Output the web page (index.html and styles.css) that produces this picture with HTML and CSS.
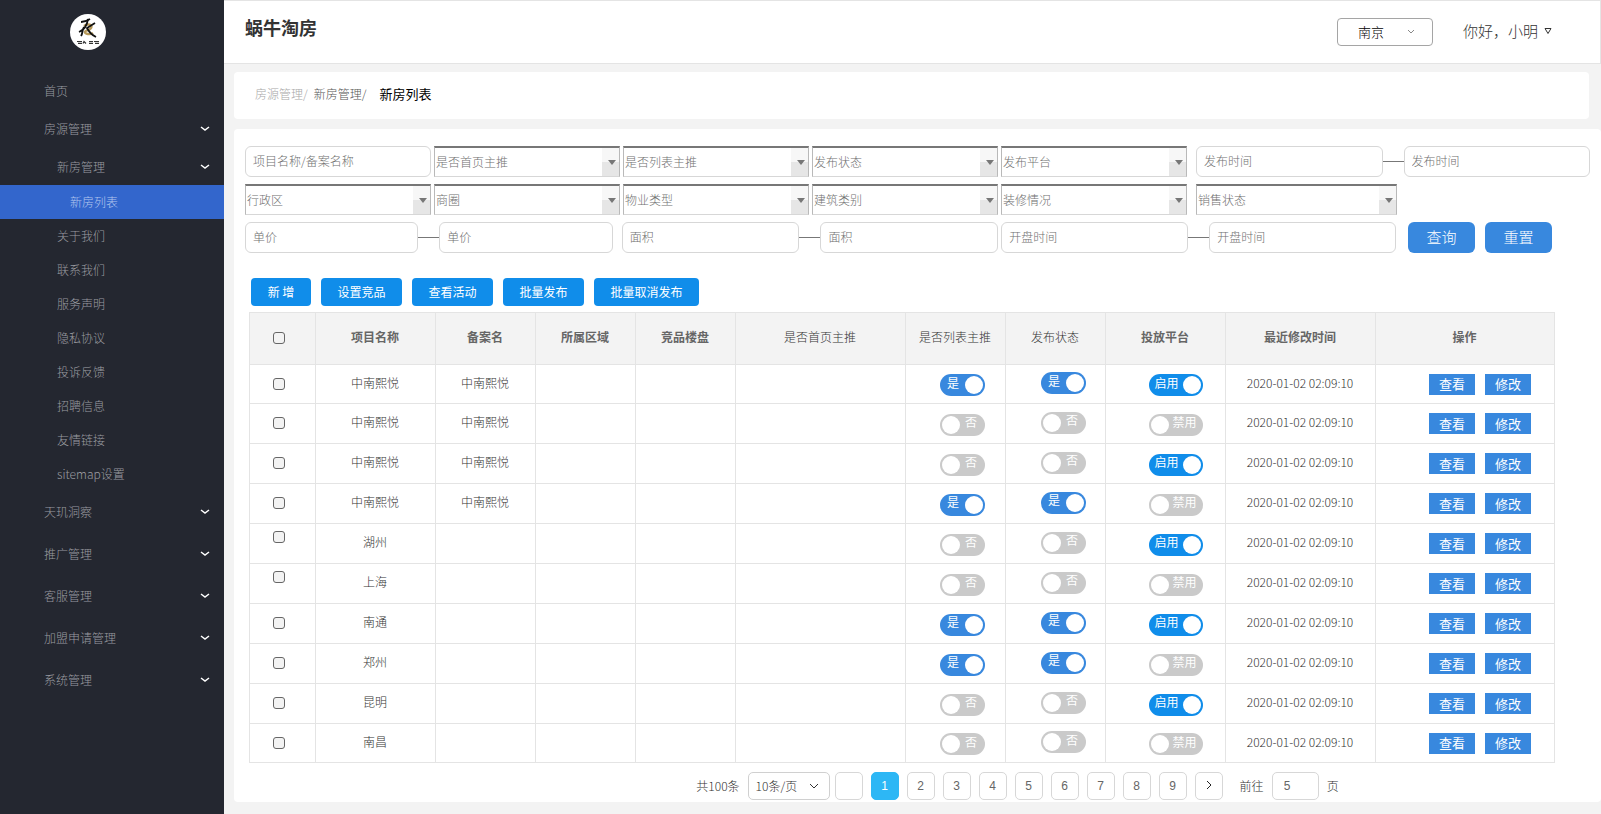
FILE: index.html
```html
<!DOCTYPE html>
<html lang="zh-CN">
<head>
<meta charset="utf-8">
<title>蜗牛淘房</title>
<link rel="stylesheet" href="styles.css">
</head>
<body>
<div class="app">
  <aside class="sidebar">
    <svg class="logo" viewBox="0 0 36 36" role="img" aria-label="天玑">
      <circle cx="18" cy="18" r="18" fill="#fff"/>
      <path d="M14 12c4-3 9-1 7 2s-6 2-6 4 5 3 8 1" fill="none" stroke="#b79a5b" stroke-width="2.500"/>
      <path d="M11 8c3 0 6-1 9-3" fill="none" stroke="#111" stroke-width="1.800"/>
      <path d="M18 5c-1 7-4 11-9 13M14 13c-2 3-1 6-3 9M25 9l-8 5c2 4 5 7 9 9" fill="none" stroke="#111" stroke-width="1.800"/>
      <path d="M7 27.500h5M8 29.300h4M13 29.500l1-2 2 2M19 27.500h4M19 29.300h4M24 27.500h5M25 29.300h4" fill="none" stroke="#333" stroke-width="1.200"/>
    </svg>
    <nav class="menu">
      <a class="item" href="#">首页</a>
      <a class="item" href="#">房源管理<svg class="icon chev" viewBox="0 0 10 6"><path d="M1 1l4 3 4-3"/></svg></a>
      <a class="item sub-head" href="#">新房管理<svg class="icon chev" viewBox="0 0 10 6"><path d="M1 1l4 3 4-3"/></svg></a>
      <a class="item sub leaf active" href="#">新房列表</a>
      <a class="item sub" href="#">关于我们</a>
      <a class="item sub" href="#">联系我们</a>
      <a class="item sub" href="#">服务声明</a>
      <a class="item sub" href="#">隐私协议</a>
      <a class="item sub" href="#">投诉反馈</a>
      <a class="item sub" href="#">招聘信息</a>
      <a class="item sub" href="#">友情链接</a>
      <a class="item sub" href="#">sitemap设置</a>
      <a class="item group" href="#">天玑洞察<svg class="icon chev" viewBox="0 0 10 6"><path d="M1 1l4 3 4-3"/></svg></a>
      <a class="item group" href="#">推广管理<svg class="icon chev" viewBox="0 0 10 6"><path d="M1 1l4 3 4-3"/></svg></a>
      <a class="item group" href="#">客服管理<svg class="icon chev" viewBox="0 0 10 6"><path d="M1 1l4 3 4-3"/></svg></a>
      <a class="item group" href="#">加盟申请管理<svg class="icon chev" viewBox="0 0 10 6"><path d="M1 1l4 3 4-3"/></svg></a>
      <a class="item group" href="#">系统管理<svg class="icon chev" viewBox="0 0 10 6"><path d="M1 1l4 3 4-3"/></svg></a>
    </nav>
  </aside>

  <div class="page">
    <header class="topbar">
      <h1>蜗牛淘房</h1>
      <div class="picker city">
        <select aria-label="城市"><option>南京</option></select>
        <svg class="icon picker-arrow" viewBox="0 0 10 6"><path d="M2 1l3 3 3-3"/></svg>
      </div>
      <button class="user" type="button">你好，小明<svg class="icon tri" viewBox="0 0 8 8"><path d="M1 1.500h6L4 6.500z"/></svg></button>
    </header>

    <nav class="crumbs" aria-label="面包屑">
      <a class="far" href="#">房源管理/</a>
      <a class="near" href="#">新房管理/</a>
      <span class="here">新房列表</span>
    </nav>

    <main class="panel">
      <form class="filters">
        <div class="line">
          <div class="w186"><input class="box" type="text" placeholder="项目名称/备案名称" aria-label="项目名称/备案名称"></div>
          <div class="combo w186"><select aria-label="是否首页主推"><option>是否首页主推</option></select></div>
          <div class="combo w186"><select aria-label="是否列表主推"><option>是否列表主推</option></select></div>
          <div class="combo w186"><select aria-label="发布状态"><option>发布状态</option></select></div>
          <div class="combo w186"><select aria-label="发布平台"><option>发布平台</option></select></div>
          <div class="range w394 spaced">
            <input class="box" type="text" placeholder="发布时间" aria-label="发布时间起"><i class="dash"></i><input class="box" type="text" placeholder="发布时间" aria-label="发布时间止">
          </div>
        </div>
        <div class="line">
          <div class="combo w186"><select aria-label="行政区"><option>行政区</option></select></div>
          <div class="combo w186"><select aria-label="商圈"><option>商圈</option></select></div>
          <div class="combo w186"><select aria-label="物业类型"><option>物业类型</option></select></div>
          <div class="combo w186"><select aria-label="建筑类别"><option>建筑类别</option></select></div>
          <div class="combo w186"><select aria-label="装修情况"><option>装修情况</option></select></div>
          <div class="w394 spaced half"><div class="combo"><select aria-label="销售状态"><option>销售状态</option></select></div></div>
        </div>
        <div class="line">
          <div class="range w367">
            <input class="box" type="text" placeholder="单价" aria-label="单价下限"><i class="dash"></i><input class="box" type="text" placeholder="单价" aria-label="单价上限">
          </div>
          <div class="range w376 spaced">
            <input class="box" type="text" placeholder="面积" aria-label="面积下限"><i class="dash"></i><input class="box" type="text" placeholder="面积" aria-label="面积上限">
          </div>
          <div class="range w394">
            <input class="box" type="text" placeholder="开盘时间" aria-label="开盘时间起"><i class="dash"></i><input class="box" type="text" placeholder="开盘时间" aria-label="开盘时间止">
          </div>
          <div class="submit">
            <button type="button">查询</button>
            <button type="button">重置</button>
          </div>
        </div>
      </form>

      <div class="actions">
        <button class="short" type="button">新 增</button>
        <button type="button">设置竞品</button>
        <button type="button">查看活动</button>
        <button type="button">批量发布</button>
        <button class="long" type="button">批量取消发布</button>
      </div>

      <table class="list">
        <colgroup>
          <col class="c66"><col class="c120"><col class="c100"><col class="c100"><col class="c100"><col class="c170"><col class="c100"><col class="c100"><col class="c120"><col class="c150"><col class="c179">
        </colgroup>
        <thead>
          <tr>
            <th class="pick"><input type="checkbox" aria-label="全选"></th>
            <th>项目名称</th><th>备案名</th><th>所属区域</th><th>竞品楼盘</th>
            <th class="plain">是否首页主推</th><th class="plain">是否列表主推</th><th class="plain">发布状态</th>
            <th>投放平台</th><th>最近修改时间</th><th>操作</th>
          </tr>
        </thead>
        <tbody>
          <tr>
            <td class="pick"><input type="checkbox" aria-label="选择第1行"></td><td>中南熙悦</td><td>中南熙悦</td><td></td><td></td><td></td>
            <td class="t1"><label class="switch"><input type="checkbox" checked><span>是</span></label></td>
            <td class="t2"><label class="switch"><input type="checkbox" checked><span>是</span></label></td>
            <td class="t3"><label class="switch wide"><input type="checkbox" checked><span>启用</span></label></td>
            <td>2020-01-02 02:09:10</td><td class="ops"><button type="button">查看</button><button type="button">修改</button></td>
          </tr>
          <tr>
            <td class="pick"><input type="checkbox" aria-label="选择第2行"></td><td>中南熙悦</td><td>中南熙悦</td><td></td><td></td><td></td>
            <td class="t1"><label class="switch"><input type="checkbox"><span>否</span></label></td>
            <td class="t2"><label class="switch"><input type="checkbox"><span>否</span></label></td>
            <td class="t3"><label class="switch wide"><input type="checkbox"><span>禁用</span></label></td>
            <td>2020-01-02 02:09:10</td><td class="ops"><button type="button">查看</button><button type="button">修改</button></td>
          </tr>
          <tr>
            <td class="pick"><input type="checkbox" aria-label="选择第3行"></td><td>中南熙悦</td><td>中南熙悦</td><td></td><td></td><td></td>
            <td class="t1"><label class="switch"><input type="checkbox"><span>否</span></label></td>
            <td class="t2"><label class="switch"><input type="checkbox"><span>否</span></label></td>
            <td class="t3"><label class="switch wide"><input type="checkbox" checked><span>启用</span></label></td>
            <td>2020-01-02 02:09:10</td><td class="ops"><button type="button">查看</button><button type="button">修改</button></td>
          </tr>
          <tr>
            <td class="pick"><input type="checkbox" aria-label="选择第4行"></td><td>中南熙悦</td><td>中南熙悦</td><td></td><td></td><td></td>
            <td class="t1"><label class="switch"><input type="checkbox" checked><span>是</span></label></td>
            <td class="t2"><label class="switch"><input type="checkbox" checked><span>是</span></label></td>
            <td class="t3"><label class="switch wide"><input type="checkbox"><span>禁用</span></label></td>
            <td>2020-01-02 02:09:10</td><td class="ops"><button type="button">查看</button><button type="button">修改</button></td>
          </tr>
          <tr>
            <td class="pick high"><input type="checkbox" aria-label="选择第5行"></td><td>湖州</td><td></td><td></td><td></td><td></td>
            <td class="t1"><label class="switch"><input type="checkbox"><span>否</span></label></td>
            <td class="t2"><label class="switch"><input type="checkbox"><span>否</span></label></td>
            <td class="t3"><label class="switch wide"><input type="checkbox" checked><span>启用</span></label></td>
            <td>2020-01-02 02:09:10</td><td class="ops"><button type="button">查看</button><button type="button">修改</button></td>
          </tr>
          <tr>
            <td class="pick high"><input type="checkbox" aria-label="选择第6行"></td><td>上海</td><td></td><td></td><td></td><td></td>
            <td class="t1"><label class="switch"><input type="checkbox"><span>否</span></label></td>
            <td class="t2"><label class="switch"><input type="checkbox"><span>否</span></label></td>
            <td class="t3"><label class="switch wide"><input type="checkbox"><span>禁用</span></label></td>
            <td>2020-01-02 02:09:10</td><td class="ops"><button type="button">查看</button><button type="button">修改</button></td>
          </tr>
          <tr>
            <td class="pick"><input type="checkbox" aria-label="选择第7行"></td><td>南通</td><td></td><td></td><td></td><td></td>
            <td class="t1"><label class="switch"><input type="checkbox" checked><span>是</span></label></td>
            <td class="t2"><label class="switch"><input type="checkbox" checked><span>是</span></label></td>
            <td class="t3"><label class="switch wide"><input type="checkbox" checked><span>启用</span></label></td>
            <td>2020-01-02 02:09:10</td><td class="ops"><button type="button">查看</button><button type="button">修改</button></td>
          </tr>
          <tr>
            <td class="pick"><input type="checkbox" aria-label="选择第8行"></td><td>郑州</td><td></td><td></td><td></td><td></td>
            <td class="t1"><label class="switch"><input type="checkbox" checked><span>是</span></label></td>
            <td class="t2"><label class="switch"><input type="checkbox" checked><span>是</span></label></td>
            <td class="t3"><label class="switch wide"><input type="checkbox"><span>禁用</span></label></td>
            <td>2020-01-02 02:09:10</td><td class="ops"><button type="button">查看</button><button type="button">修改</button></td>
          </tr>
          <tr>
            <td class="pick"><input type="checkbox" aria-label="选择第9行"></td><td>昆明</td><td></td><td></td><td></td><td></td>
            <td class="t1"><label class="switch"><input type="checkbox"><span>否</span></label></td>
            <td class="t2"><label class="switch"><input type="checkbox"><span>否</span></label></td>
            <td class="t3"><label class="switch wide"><input type="checkbox" checked><span>启用</span></label></td>
            <td>2020-01-02 02:09:10</td><td class="ops"><button type="button">查看</button><button type="button">修改</button></td>
          </tr>
          <tr>
            <td class="pick"><input type="checkbox" aria-label="选择第10行"></td><td>南昌</td><td></td><td></td><td></td><td></td>
            <td class="t1"><label class="switch"><input type="checkbox"><span>否</span></label></td>
            <td class="t2"><label class="switch"><input type="checkbox"><span>否</span></label></td>
            <td class="t3"><label class="switch wide"><input type="checkbox"><span>禁用</span></label></td>
            <td>2020-01-02 02:09:10</td><td class="ops"><button type="button">查看</button><button type="button">修改</button></td>
          </tr>
        </tbody>
      </table>

      <div class="pager">
        <span class="total">共100条</span>
        <div class="size-prev">
          <div class="picker size">
            <select aria-label="每页条数"><option>10条/页</option></select>
            <svg class="icon picker-arrow" viewBox="0 0 10 6"><path d="M1 1l4 4 4-4"/></svg>
          </div>
          <button class="num" type="button" aria-label="上一页"></button>
        </div>
        <button class="num current" type="button">1</button>
        <button class="num" type="button">2</button>
        <button class="num" type="button">3</button>
        <button class="num" type="button">4</button>
        <button class="num" type="button">5</button>
        <button class="num" type="button">6</button>
        <button class="num" type="button">7</button>
        <button class="num" type="button">8</button>
        <button class="num" type="button">9</button>
        <button class="num" type="button" aria-label="下一页"><svg class="icon next" viewBox="0 0 6 10"><path d="M1 1l4 4-4 4"/></svg></button>
        <label class="jump">前往<input type="text" value="5"></label>
        <span>页</span>
      </div>
    </main>
  </div>
</div>
</body>
</html>
```

FILE: styles.css
```css
* {
  box-sizing: border-box;
}

body {
  margin: 0;
  background: #f3f3f3;
  color: #333;
  font: 300 12px/18px "Noto Sans CJK SC", "Noto Sans", sans-serif;
}

a {
  color: inherit;
  text-decoration: none;
}

button,
input,
select {
  margin: 0;
  font: inherit;
  color: inherit;
}

button {
  padding: 0;
  border: 0;
  background: none;
}

.icon path {
  fill: none;
  stroke: currentColor;
}

.app {
  display: flex;
  min-height: 100vh;
}

/* sidebar */
.sidebar {
  flex: none;
  width: 224px;
  background: #242730;
  color: #9b9ca0;
}

.logo {
  display: block;
  width: 36px;
  height: 36px;
  margin: 14px 0 22px 70px;
}

.menu {
  display: flex;
  flex-direction: column;
}

.item {
  display: flex;
  align-items: center;
  justify-content: space-between;
  height: 38px;
  padding: 0 14px 0 44px;
}

.item.sub-head,
.item.sub {
  padding-left: 57px;
}

.item.sub-head {
  height: 37px;
}

.item.sub {
  height: 34px;
}

.item.leaf {
  padding-left: 70px;
}

.item.group {
  height: 42px;
}

.item.active {
  background: #36c;
  color: #b4c6ee;
}

.chev {
  width: 10px;
  height: 6px;
  color: #fff;
  stroke-width: 1.5;
}

/* header */
.page {
  flex: 1;
  min-width: 0;
}

.topbar {
  display: flex;
  align-items: flex-start;
  height: 64px;
  padding: 17px 48px 0 21px;
  border: 1px solid #e4e4e4;
  border-left: 0;
  background: #fff;
}

h1 {
  flex: 1;
  margin: 0;
  color: #333;
  font-size: 18px;
  line-height: 18px;
}

.picker {
  display: grid;
  align-items: center;
}

.picker > * {
  grid-area: 1 / 1;
}

.picker select {
  width: 100%;
  height: 28px;
  appearance: none;
  border: 1px solid #d0d0d0;
  border-radius: 5px;
  background: #fff;
}

.picker-arrow {
  justify-self: end;
  width: 10px;
  height: 6px;
  pointer-events: none;
}

.city {
  width: 96px;
  margin-right: 30px;
}

.city select {
  padding: 0 20px 1px;
  border-color: #a5a5a5;
  border-radius: 4px;
  color: #000;
  font-size: 13px;
}

.city .picker-arrow {
  margin-right: 17px;
  color: #888;
}

.user {
  display: flex;
  align-items: center;
  gap: 6px;
  height: 26px;
  font-size: 15px;
}

.tri {
  width: 8px;
  height: 8px;
}

.crumbs {
  display: flex;
  align-items: center;
  gap: 6px;
  height: 47px;
  margin: 8px 12px 10px 10px;
  padding: 0 21px 4px;
  border-radius: 4px;
  background: #fff;
}

.far {
  color: #a8a8a8;
}

.near {
  color: #555;
}

.here {
  margin-left: 7px;
  color: #000;
  font-size: 13px;
  font-weight: 400;
}

/* panel */
.panel {
  margin: 0 0 12px 10px;
  padding: 17px 11px 2px;
  border-radius: 4px;
  background: #fff;
}

.filters {
  display: flex;
  flex-direction: column;
  gap: 7px;
}

.line {
  display: flex;
  gap: 3px;
}

.line > * {
  min-width: 0;
}

.w186 {
  flex: 186 1 0;
}

.w367 {
  flex: 367 1 0;
}

.w376 {
  flex: 376 1 0;
}

.w394 {
  flex: 394 1 0;
}

.spaced {
  margin-left: 6px;
}

.box {
  display: block;
  width: 100%;
  min-width: 0;
  height: 31px;
  padding: 0 7px 3px;
  border: 1px solid #d7d7d7;
  border-radius: 6px;
  background: #fff;
}

.box::placeholder {
  color: #707070;
}

.range {
  display: flex;
  align-items: center;
}

.range .box {
  flex: 1;
}

.dash {
  flex: none;
  width: 21px;
  height: 1px;
  background: #777;
}

.combo {
  position: relative;
  height: 31px;
}

.combo select {
  width: 100%;
  height: 31px;
  padding: 0 19px 1px 1px;
  appearance: none;
  border: 1px solid #b9b9b9;
  border-top: 2px solid #777;
  border-bottom-color: #d7d7d7;
  border-radius: 0;
  background: linear-gradient(#f7f7f7 50%, #e6e6e6 50%) right / 17px 100% no-repeat #fff;
  color: #707070;
}

.combo::after {
  position: absolute;
  top: 14px;
  right: 4px;
  border: 4px solid transparent;
  border-top: 5px solid #777;
  border-bottom: 0;
  content: "";
  pointer-events: none;
}

.half .combo {
  width: 51%;
}

.submit {
  display: flex;
  gap: 10px;
  margin: 0 38px 0 9px;
}

.submit button {
  width: 67px;
  height: 31px;
  padding-bottom: 1px;
  border-radius: 6px;
  background: #3888de;
  color: #fff;
  font-size: 15px;
}

.actions {
  display: flex;
  gap: 10px;
  margin: 25px 6px 6px;
}

.actions button {
  width: 81px;
  height: 28px;
  padding-bottom: 1px;
  border-radius: 4px;
  background: #108dea;
  color: #fff;
  font-weight: 400;
}

.actions .short {
  width: 60px;
}

.actions .long {
  width: 105px;
}

/* table */
.list {
  width: calc(100% - 39px);
  margin-left: 4px;
  border-collapse: collapse;
  table-layout: fixed;
  text-align: center;
}

.c66 { width: 66px; }
.c100 { width: 100px; }
.c120 { width: 120px; }
.c150 { width: 150px; }
.c170 { width: 170px; }
.c179 { width: 179px; }

.list th,
.list td {
  padding: 0 1px 3px 0;
  border: 1px solid #e4e4e4;
}

.list th {
  height: 52px;
  background: #f3f3f3;
  color: #666;
}

.list td {
  height: 40px;
}

.list tbody tr:first-child td {
  height: 39px;
}

.list tbody tr:last-child td {
  height: 39px;
}

.list .plain {
  color: #333;
  font-weight: 300;
}

.list .pick {
  padding: 0 8px 1px 0;
}

.pick input {
  display: block;
  width: 12px;
  height: 12px;
  margin: 0 auto;
  appearance: none;
  border: 1px solid #666;
  border-radius: 3px;
  background: #f3f3f3;
}

.list .high {
  padding-top: 7px;
  vertical-align: top;
}

.list .t1 {
  padding: 2px 0 0 13px;
}

.list .t2 {
  padding: 0 0 2px 15px;
}

.list .t3 {
  padding: 2px 0 0 20px;
}

.switch {
  display: flex;
  flex-direction: row;
  align-items: center;
  width: 45px;
  height: 22px;
  margin: 0 auto;
  padding: 0 2px;
  border-radius: 11px;
  background: #cacaca;
  color: #fff;
  font-weight: 400;
}

.switch:has(:checked) {
  flex-direction: row-reverse;
  background: #3888de;
}

.switch.wide {
  width: 54px;
}

.switch.wide:has(:checked) {
  background: #108dea;
}

.switch input {
  flex: none;
  width: 18px;
  height: 18px;
  appearance: none;
  border-radius: 50%;
  background: #fff;
}

.switch span {
  flex: 1;
  padding-bottom: 5px;
}

.list .ops {
  padding: 0 23px 0 0;
  text-align: right;
}

.ops button {
  width: 46px;
  height: 21px;
  margin-left: 10px;
  background: #3888de;
  color: #fff;
  font-size: 13px;
  font-weight: 400;
  vertical-align: middle;
}

/* pagination */
.pager {
  display: flex;
  align-items: center;
  justify-content: center;
  gap: 8px;
  margin-top: 9px;
  padding-left: 200px;
}

.size-prev {
  display: flex;
  gap: 5px;
}

.size {
  width: 82px;
}

.size select {
  padding: 0 7px;
}

.size .picker-arrow {
  margin-right: 11px;
}

.num,
.jump input {
  height: 28px;
  border: 1px solid #d7d7d7;
  border-radius: 5px;
  background: #fff;
  color: #666;
  font-family: "Liberation Sans", sans-serif;
}

.num {
  width: 28px;
}

.num.current {
  border-color: #2db7f5;
  background: #2db7f5;
  color: #fff;
}

.next {
  width: 6px;
  height: 10px;
  color: #222;
}

.jump {
  display: flex;
  align-items: center;
  gap: 8px;
  margin-left: 9px;
}

.jump input {
  width: 47px;
  padding: 0 11px;
}
```
